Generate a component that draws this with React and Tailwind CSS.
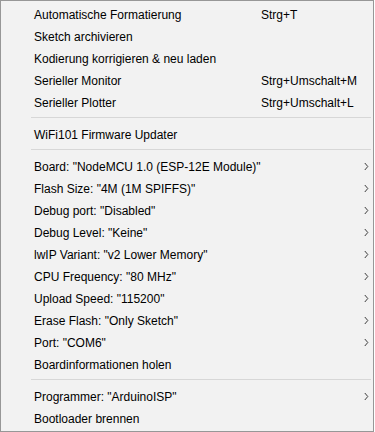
const groups = [
  [
    { label: "Automatische Formatierung", shortcut: "Strg+T" },
    { label: "Sketch archivieren" },
    { label: "Kodierung korrigieren & neu laden" },
    { label: "Serieller Monitor", shortcut: "Strg+Umschalt+M" },
    { label: "Serieller Plotter", shortcut: "Strg+Umschalt+L" },
  ],
  [{ label: "WiFi101 Firmware Updater" }],
  [
    { label: 'Board: "NodeMCU 1.0 (ESP-12E Module)"', sub: true },
    { label: 'Flash Size: "4M (1M SPIFFS)"', sub: true },
    { label: 'Debug port: "Disabled"', sub: true },
    { label: 'Debug Level: "Keine"', sub: true },
    { label: 'lwIP Variant: "v2 Lower Memory"', sub: true },
    { label: 'CPU Frequency: "80 MHz"', sub: true },
    { label: 'Upload Speed: "115200"', sub: true },
    { label: 'Erase Flash: "Only Sketch"', sub: true },
    { label: 'Port: "COM6"', sub: true },
    { label: "Boardinformationen holen" },
  ],
  [
    { label: 'Programmer: "ArduinoISP"', sub: true },
    { label: "Bootloader brennen" },
  ],
];

function Chevron() {
  return (
    <svg width="5" height="9" viewBox="0 0 5 9" className="mr-[4px]">
      <path d="M0.8 1 L3.8 4.5 L0.8 8" fill="none" stroke="#3c3c3c" strokeWidth="1" />
    </svg>
  );
}

function Item({ label, shortcut, sub }) {
  return (
    <div className="flex h-[22px] items-center pl-[33px] leading-[22px] pt-px">
      <span className="w-[227px] shrink-0 whitespace-nowrap">{label}</span>
      {shortcut && <span className="whitespace-nowrap">{shortcut}</span>}
      {sub && (
        <span className="ml-auto flex items-center">
          <Chevron />
        </span>
      )}
    </div>
  );
}

function Separator() {
  return (
    <div className="pt-[4px] pb-[5px] pl-[30px] pr-[2px]">
      <div className="h-px bg-[#d7d7d7]" />
    </div>
  );
}

export default function App() {
  return (
    <div className="h-[432px] w-[375px] bg-white">
      <div
        className="h-[432px] w-[374px] border border-[#979797] bg-[#f2f2f2] py-[2px] text-[12px] text-black"
        style={{ fontFamily: '"Liberation Sans", Arial, sans-serif' }}
      >
        {groups.map((g, i) => (
          <div key={i}>
            {i > 0 && <Separator />}
            {g.map((it) => (
              <Item key={it.label} {...it} />
            ))}
          </div>
        ))}
      </div>
    </div>
  );
}
